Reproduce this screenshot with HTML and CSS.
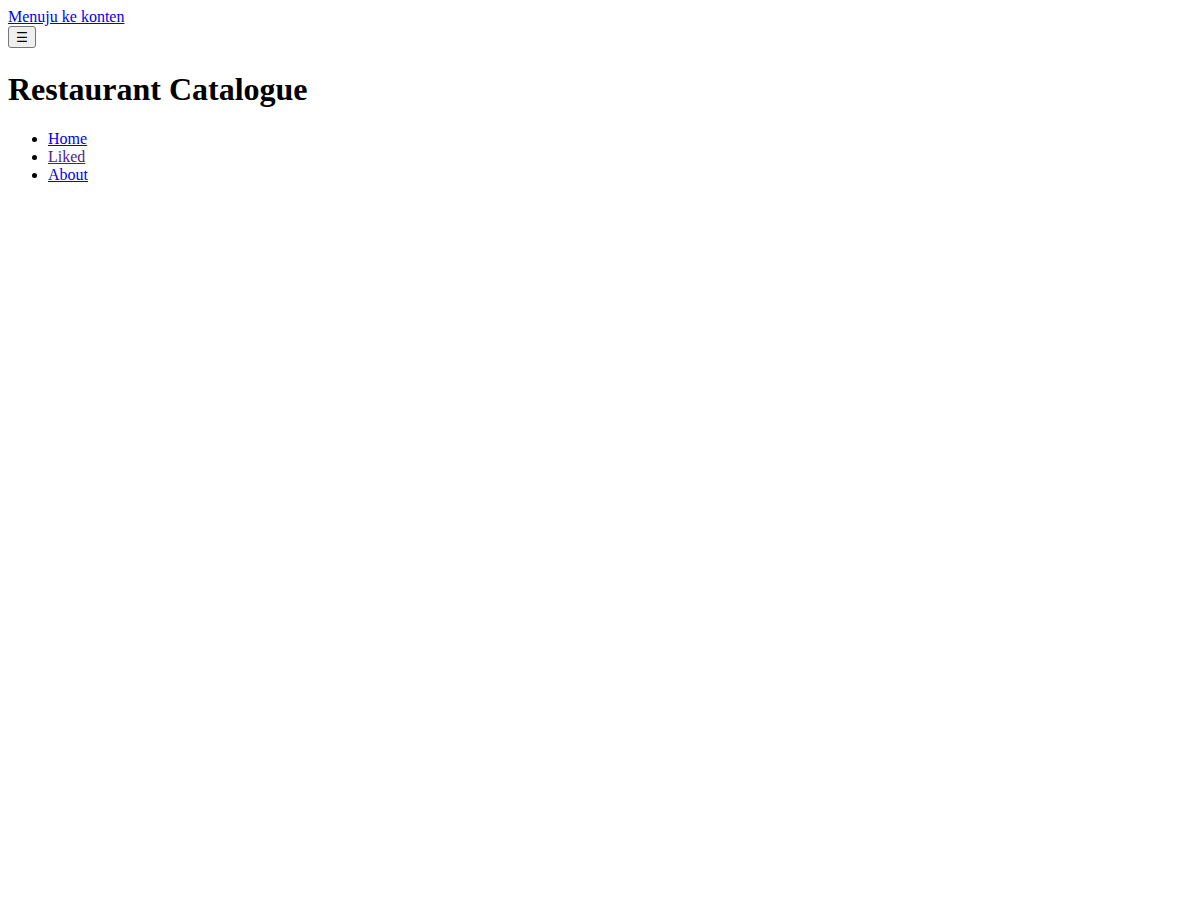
FILE: index.html
```html
<!DOCTYPE html>
<html lang="id">
<head>
<meta charset="utf-8">
<title>Restaurant Catalogue</title>
<link rel="stylesheet" href="styles.css">
</head>
<body class="page">
<a href="#content" class="skip-link">Menuju ke konten</a>
<header class="app-bar">
  <div class="app-bar-menu">
    <button class="menu-button" type="button" aria-label="Menu">☰</button>
  </div>
  <div class="app-bar-brand">
    <h1 class="brand-title">Restaurant Catalogue</h1>
  </div>
  <nav class="app-bar-nav">
    <ul class="nav-list">
      <li class="nav-item"><a class="nav-link" href="#/home">Home</a></li>
      <li class="nav-item"><a class="nav-link nav-link-visited" href="#/liked">Liked</a></li>
      <li class="nav-item"><a class="nav-link" href="#/about">About</a></li>
    </ul>
  </nav>
</header>
<main id="content" class="main-content"></main>
</body>
</html>
```
FILE: styles.css
```css
.page {
  margin: 8px;
  font-family: "Liberation Serif", "Times New Roman", serif;
  font-size: 16px;
  color: #000;
  background: #fff;
}

.skip-link,
.nav-link {
  color: #0000ee;
  text-decoration: underline;
}

.nav-link-visited {
  color: #551a8b;
}

.app-bar-menu {
  display: flex;
  padding-bottom: 2px;
}

.menu-button {
  display: flex;
  align-items: center;
  justify-content: center;
  box-sizing: border-box;
  width: 28px;
  height: 22px;
  font-family: "DejaVu Sans", "Liberation Sans", sans-serif;
  font-size: 13.333px;
  padding: 0;
  margin: 0;
  border: 1px solid #767676;
  border-radius: 3px;
  background: #efefef;
  color: #000;
}

.brand-title {
  font-size: 32px;
  font-weight: bold;
  margin: 21.44px 0;
}

.nav-list {
  margin: 15px 0 16px;
  padding-left: 40px;
  list-style: disc;
}
```
